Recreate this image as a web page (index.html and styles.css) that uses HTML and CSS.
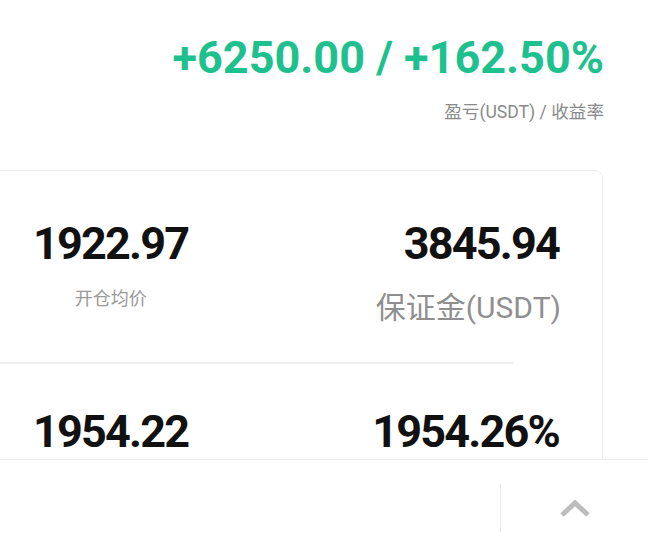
FILE: index.html
```html
<!DOCTYPE html>
<html lang="zh-CN">
<head>
    <meta charset="UTF-8">
    <meta name="viewport" content="width=device-width, initial-scale=1.0">
    <title>持仓详情</title>
    <link rel="stylesheet" href="styles.css">
</head>
<body>
    <div id="page">
        <div class="main">
            <div class="head">
                <p class="pnl">+6250.00 / +162.50%</p>
                <p class="pnl-label">盈亏(USDT) / 收益率</p>
            </div>
            <div class="card">
                <div class="row">
                    <div class="cell left">
                        <p class="num">1922.97</p>
                        <p class="tip small">开仓均价</p>
                    </div>
                    <div class="cell right">
                        <p class="num">3845.94</p>
                        <p class="tip big">保证金(USDT)</p>
                    </div>
                </div>
                <div class="sep"></div>
                <div class="row second">
                    <div class="cell left">
                        <p class="num">1954.22</p>
                    </div>
                    <div class="cell right">
                        <p class="num">1954.26%</p>
                    </div>
                </div>
            </div>
        </div>
        <div class="foot">
            <div class="space"></div>
            <div class="up">
                <svg width="36" height="22" viewBox="0 0 36 22">
                    <polyline points="5,18 18,6 31,18" fill="none" stroke="#bdbdbd" stroke-width="5" stroke-linejoin="miter"/>
                </svg>
            </div>
        </div>
    </div>
</body>
</html>
```

FILE: styles.css
```css
body,p{
    margin:0;
}
body{
    background-color:#fff;
    font-family:Roboto,"Noto Sans CJK SC",sans-serif;
}
#page{
    display:flex;
    flex-direction:column;
    width:648px;
    height:544px;
    overflow:hidden;
}
.main{
    flex:1;
    overflow:hidden;
}
/* 顶部盈亏 */
.head{
    padding:32px 44px 0 0;
    text-align:right;
}
.pnl{
    font-size:45px;
    line-height:52px;
    font-weight:700;
    color:#1ec18e;
}
.pnl-label{
    margin-top:16px;
    font-size:17.6px;
    line-height:24px;
    color:#8a8a8a;
}
/* 卡片 */
.card{
    margin:46px 45px 0 -10px;
    border:1px solid #ededed;
    border-radius:8px;
    height:400px;
}
.row{
    display:flex;
    justify-content:space-between;
    padding:50px 43px 0 42px;
    height:141px;
}
.row.second{
    padding-top:45px;
}
.cell.left{
    text-align:center;
}
.cell.right{
    text-align:right;
}
.num{
    font-size:45px;
    line-height:45px;
    font-weight:700;
    letter-spacing:-1.8px;
    color:#111;
}
.tip{
    color:#8f8f8f;
}
.tip.small{
    margin-top:21px;
    font-size:18px;
    line-height:24px;
    color:#9a9a9a;
}
.tip.big{
    margin:24px -2px 0 0;
    font-size:30px;
    line-height:36px;
}
.sep{
    margin-right:89px;
    border-top:2px solid #f0f0f0;
}
/* 底部 */
.foot{
    display:flex;
    height:84px;
    border-top:1px solid #ececec;
}
.space{
    flex:1;
}
.up{
    display:flex;
    align-items:center;
    justify-content:center;
    width:147px;
    margin:24px 0 12px;
    border-left:1px solid #ededed;
}
```
